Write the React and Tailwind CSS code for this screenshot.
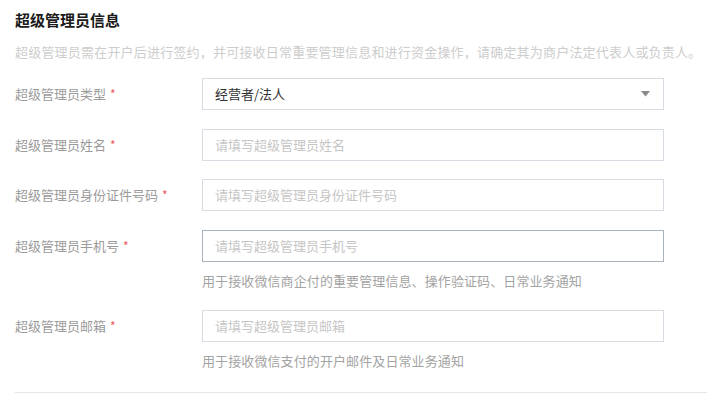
const font = { fontFamily: '"Noto Sans CJK SC", "Noto Sans", sans-serif' };

function Label({ children }) {
  return (
    <div className="w-[187px] shrink-0 flex items-center text-[13px] text-[#9b9b9b] leading-[18px]">
      <span>{children}</span>
      <span className="ml-[4px] text-[#e85b5b] text-[12px]">*</span>
    </div>
  );
}

function Field({ label, placeholder, active, hint }) {
  return (
    <div>
      <div className="flex items-center">
        <Label>{label}</Label>
        <div
          className={
            "w-[462px] h-[32px] bg-white border flex items-center px-[12px] text-[13px] text-[#c6c6c6] " +
            (active ? "border-[#a9b2bf]" : "border-[#d7dbe2]")
          }
        >
          {placeholder}
        </div>
      </div>
      {hint && (
        <div className="ml-[187px] mt-[10px] text-[13px] tracking-[0.1px] leading-[18px] text-[#a3a3a3]">
          {hint}
        </div>
      )}
    </div>
  );
}

export default function App() {
  return (
    <div className="w-[707px] h-[394px] bg-white overflow-hidden" style={font}>
      <div className="pl-[15px] pt-[11px]">
        <h2 className="text-[15px] font-bold leading-[18px] text-[#1a1a1a]">超级管理员信息</h2>
        <p className="mt-[14px] text-[13px] tracking-[0.2px] leading-[18px] text-[#cdcdcd] whitespace-nowrap">
          超级管理员需在开户后进行签约，并可接收日常重要管理信息和进行资金操作，请确定其为商户法定代表人或负责人。
        </p>

        <div className="mt-[17px] flex flex-col gap-[18.5px]">
          <div className="flex items-center">
            <Label>超级管理员类型</Label>
            <div className="w-[462px] h-[32px] bg-white border border-[#d7dbe2] flex items-center justify-between pl-[12px] pr-[13px] text-[13px] text-[#333]">
              <span>经营者/法人</span>
              <svg width="9" height="6" viewBox="0 0 9 6">
                <path d="M0 0 L9 0 L4.5 5.5 Z" fill="#8a8a8a" />
              </svg>
            </div>
          </div>
          <Field label="超级管理员姓名" placeholder="请填写超级管理员姓名" />
          <Field label="超级管理员身份证件号码" placeholder="请填写超级管理员身份证件号码" />
          <Field
            label="超级管理员手机号"
            placeholder="请填写超级管理员手机号"
            active
            hint="用于接收微信商企付的重要管理信息、操作验证码、日常业务通知"
          />
        </div>
        <div className="mt-[20px]">
          <Field
            label="超级管理员邮箱"
            placeholder="请填写超级管理员邮箱"
            hint="用于接收微信支付的开户邮件及日常业务通知"
          />
        </div>
        <div className="mt-[22px] border-t border-[#e6e6e6]" />
      </div>
    </div>
  );
}
